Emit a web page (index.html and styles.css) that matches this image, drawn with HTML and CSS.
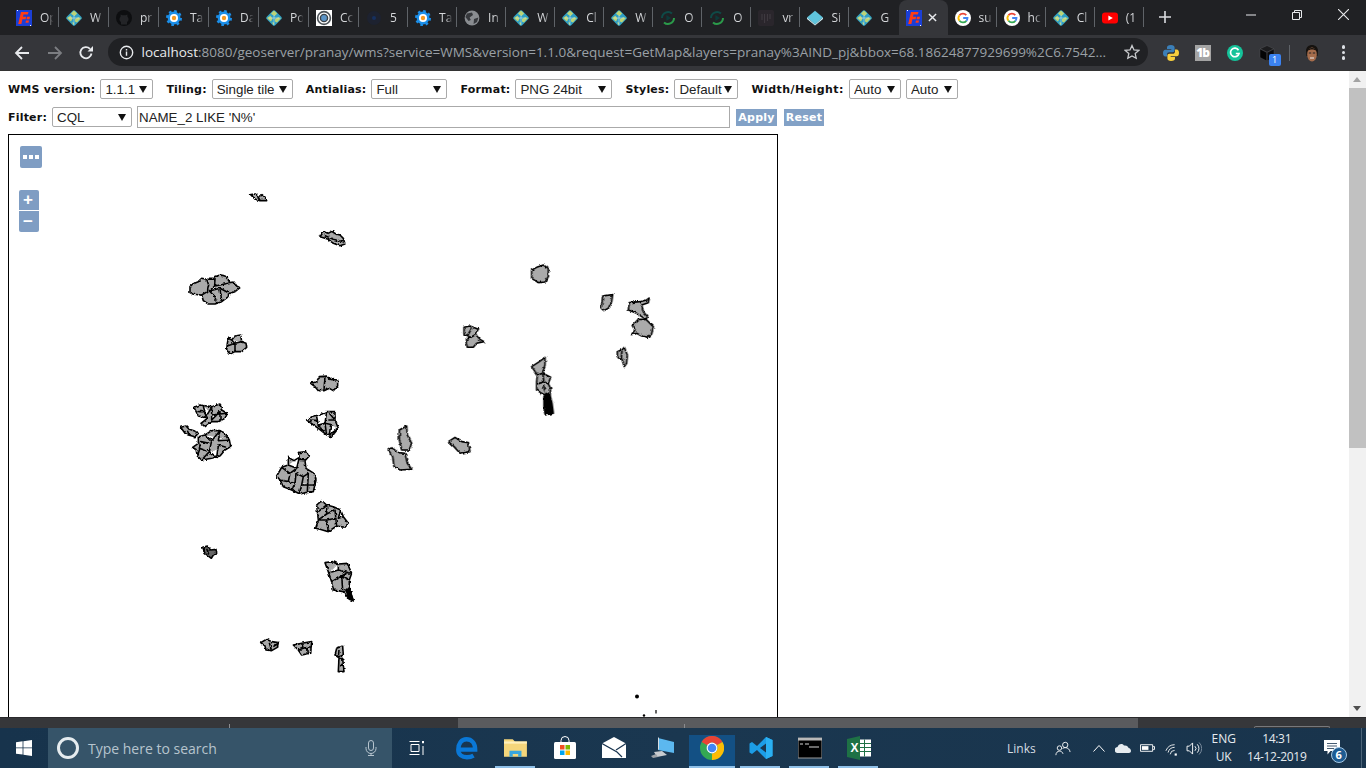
FILE: index.html
```html
<!DOCTYPE html>
<html lang="en">
<head>
  <meta charset="UTF-8">
  <title>GeoServer Layer Preview</title>
  <link rel="stylesheet" href="styles.css">
</head>
<body>
  <!-- shared favicons -->
  <svg class="defs" xmlns="http://www.w3.org/2000/svg">
    <symbol id="i-fw" viewBox="0 0 16 16">
      <rect width="16" height="16" fill="#1b3fd6"/>
      <path d="M1 0h1v1H1zM14 15h1v1h-1z" fill="#fff"/>
      <polygon points="5,2 12.500,2 11.800,4.600 7.500,4.600 7,6.800 10.200,6.800 9.600,9.200 6.400,9.200 5.400,14 2.200,14" fill="#ff3d14"/>
      <path d="M11 6.800h3l-.5 2.400h-3zM10 10.400h3l-.5 2.400h-3z" fill="#ff3d14"/>
    </symbol>
    <symbol id="i-globe" viewBox="0 0 16 16">
      <rect x="2" y="2" width="12" height="12" rx="1.800" transform="rotate(45 8 8)" fill="#2f9fc4"/>
      <path d="M8 .4 11.200 3.600 8.600 6 6 4.600 5 3.400zM1 8l3.400-2.200 2.200 2.600L5 11.400 3.600 10.600zM9 9l3.200-1.800L15 8l-4 4.600L9 11.400zM6 12.400l2 .2L8 15.600z" fill="#bcd476"/>
      <path d="M8 5 8 15M3 8 13 8" stroke="#d9f0f4" stroke-width=".5"/>
    </symbol>
    <symbol id="i-git" viewBox="0 0 16 16">
      <circle cx="8" cy="8" r="8" fill="#0d0e10"/>
      <path d="M5 14.600V12C3 11 3 8 4.600 6.400L4.600 4.400 6.400 5.200H9.600L11.400 4.400V6.400C13 8 13 11 11 12V14.600z" fill="#232427"/>
    </symbol>
    <symbol id="i-gear" viewBox="0 0 16 16">
      <circle cx="8" cy="8" r="6.400" fill="#1b8fe9"/>
      <circle cx="8" cy="8" r="6.800" fill="none" stroke="#1b8fe9" stroke-width="2.400" stroke-dasharray="2.600 2.740"/>
      <circle cx="8" cy="8" r="4" fill="#fff"/>
      <circle cx="8" cy="8" r="2.200" fill="#f59a23"/>
    </symbol>
    <symbol id="i-rings" viewBox="0 0 16 16">
      <rect width="16" height="16" fill="#fff"/>
      <circle cx="8" cy="8" r="6.400" fill="none" stroke="#4b5157" stroke-width="1.600"/>
      <circle cx="8" cy="8" r="3.600" fill="#5a93c6" stroke="#3b4248" stroke-width="1.400"/>
    </symbol>
    <symbol id="i-navy" viewBox="0 0 16 16">
      <circle cx="8" cy="8" r="7" fill="#1d2230"/>
      <circle cx="8" cy="8" r="2" fill="#16305f"/>
    </symbol>
    <symbol id="i-earth" viewBox="0 0 16 16">
      <circle cx="8" cy="8" r="7.400" fill="#8a8d91"/>
      <path d="M3 3.400 8 2.400 9 5 5.600 7.600 6.800 10 4.600 11 1.400 7zM10 9l4.400-1.400L13 12 9.600 14z" fill="#36383c"/>
    </symbol>
    <symbol id="i-sync" viewBox="0 0 16 16">
      <path d="M2 8a6 6 0 0 1 10-4.400" fill="none" stroke="#0e4a47" stroke-width="2"/>
      <path d="M14 8a6 6 0 0 1-10 4.400" fill="none" stroke="#2b9a4a" stroke-width="2"/>
      <polygon points="6.400,5 11,8 6.400,11" fill="#0d3a3a"/>
    </symbol>
    <symbol id="i-bars" viewBox="0 0 16 16">
      <rect width="16" height="16" rx="2" fill="#2a262c"/>
      <path d="M4 4v6M6.600 4v9M9.400 4v7M12 4v5" stroke="#413c43" stroke-width="1"/>
    </symbol>
    <symbol id="i-gem" viewBox="0 0 16 16">
      <polygon points="8,.8 16,7.600 8,14.400 0,7.600" fill="#5fc4dc"/>
      <polygon points="0,7.600 8,14.400 16,7.600 16,9 8,15.400 0,9" fill="#d6f2f8"/>
    </symbol>
    <symbol id="i-google" viewBox="0 0 16 16">
      <circle cx="8" cy="8" r="8" fill="#fff"/>
      <path d="M11.300 5.100A4.500 4.500 0 0 0 4.500 5.200" fill="none" stroke="#ea4335" stroke-width="1.800"/>
      <path d="M4.500 5.200A4.500 4.500 0 0 0 4.500 10.800" fill="none" stroke="#fbbc05" stroke-width="1.800"/>
      <path d="M4.500 10.800A4.500 4.500 0 0 0 11.400 10.900" fill="none" stroke="#34a853" stroke-width="1.800"/>
      <path d="M11.400 10.900A4.500 4.500 0 0 0 12.500 8H8.200" fill="none" stroke="#4285f4" stroke-width="1.800"/>
    </symbol>
    <symbol id="i-yt" viewBox="0 0 16 16">
      <rect y="2.400" width="16" height="11.200" rx="3" fill="#f00"/>
      <polygon points="6.400,5.600 10.800,8 6.400,10.400" fill="#fff"/>
    </symbol>
  </svg>

  <div class="tabstrip">
    <div class="tabs">
      <div class="tab"><svg class="fav"><use href="#i-fw"/></svg><span class="tab-title">Op</span></div>
      <div class="tab"><svg class="fav"><use href="#i-globe"/></svg><span class="tab-title">W</span></div>
      <div class="tab"><svg class="fav"><use href="#i-git"/></svg><span class="tab-title">pr</span></div>
      <div class="tab"><svg class="fav"><use href="#i-gear"/></svg><span class="tab-title">Ta</span></div>
      <div class="tab"><svg class="fav"><use href="#i-gear"/></svg><span class="tab-title">Da</span></div>
      <div class="tab"><svg class="fav"><use href="#i-globe"/></svg><span class="tab-title">Po</span></div>
      <div class="tab"><svg class="fav"><use href="#i-rings"/></svg><span class="tab-title">Cc</span></div>
      <div class="tab"><svg class="fav"><use href="#i-navy"/></svg><span class="tab-title">5</span></div>
      <div class="tab"><svg class="fav"><use href="#i-gear"/></svg><span class="tab-title">Ta</span></div>
      <div class="tab"><svg class="fav"><use href="#i-earth"/></svg><span class="tab-title">In</span></div>
      <div class="tab"><svg class="fav"><use href="#i-globe"/></svg><span class="tab-title">W</span></div>
      <div class="tab"><svg class="fav"><use href="#i-globe"/></svg><span class="tab-title">Cl</span></div>
      <div class="tab"><svg class="fav"><use href="#i-globe"/></svg><span class="tab-title">W</span></div>
      <div class="tab"><svg class="fav"><use href="#i-sync"/></svg><span class="tab-title">O</span></div>
      <div class="tab"><svg class="fav"><use href="#i-sync"/></svg><span class="tab-title">O</span></div>
      <div class="tab"><svg class="fav"><use href="#i-bars"/></svg><span class="tab-title">vr</span></div>
      <div class="tab"><svg class="fav"><use href="#i-gem"/></svg><span class="tab-title">Si</span></div>
      <div class="tab tab-before-active"><svg class="fav"><use href="#i-globe"/></svg><span class="tab-title">G</span></div>
      <div class="tab tab-active"><svg class="fav"><use href="#i-fw"/></svg>
        <svg class="tab-close" viewBox="0 0 10 10"><path d="M1 1l8 8M9 1l-8 8"/></svg></div>
      <div class="tab"><svg class="fav"><use href="#i-google"/></svg><span class="tab-title">su</span></div>
      <div class="tab"><svg class="fav"><use href="#i-google"/></svg><span class="tab-title">hc</span></div>
      <div class="tab"><svg class="fav"><use href="#i-globe"/></svg><span class="tab-title">Cl</span></div>
      <div class="tab"><svg class="fav"><use href="#i-yt"/></svg><span class="tab-title">(1</span></div>
    </div>
    <svg class="new-tab" viewBox="0 0 12 12"><path d="M6 0v12M0 6h12"/></svg>
    <div class="win-controls">
      <div class="win-btn"><svg viewBox="0 0 10 10"><path d="M0 5h10"/></svg></div>
      <div class="win-btn"><svg viewBox="0 0 10 10"><path d="M.5 2.500h7v7h-7zM2.500 2.500v-2h7v7h-2"/></svg></div>
      <div class="win-btn"><svg viewBox="0 0 10 10"><path d="M0 0l10 10M10 0L0 10"/></svg></div>
    </div>
  </div>

  <div class="toolbar">
    <svg class="nav-icon" viewBox="0 0 16 16"><path d="M15 8H2M8 2 2 8l6 6"/></svg>
    <svg class="nav-icon nav-off" viewBox="0 0 16 16"><path d="M1 8h13M8 2l6 6-6 6"/></svg>
    <svg class="nav-icon nav-reload" viewBox="0 0 16 16"><path d="M13.500 8.500A5.600 5.600 0 1 1 12 3.800"/><path class="solid" d="M9.500 6.500H15V1z"/></svg>
    <div class="omnibox">
      <svg class="info-icon" viewBox="0 0 16 16"><circle cx="8" cy="8" r="6.600"/><path d="M8 7v4.500M8 4.200v1.600"/></svg>
      <span class="url"><span class="url-host">localhost</span>:8080/geoserver/pranay/wms?service=WMS&amp;version=1.1.0&amp;request=GetMap&amp;layers=pranay%3AIND_pj&amp;bbox=68.18624877929699%2C6.7542...</span>
      <svg class="star" viewBox="0 0 16 16"><path d="M8 1.500l2 4.400 4.800.5-3.600 3.200 1 4.700L8 11.900l-4.200 2.400 1-4.700L1.200 6.400 6 5.900z"/></svg>
    </div>
    <div class="ext-icons">
      <svg class="ext" viewBox="0 0 16 16">
        <path d="M8 0C5 0 4 1 4 2.500V4h4.300v.7H2.400C.8 4.700 0 6 0 8s.8 3.500 2.300 3.500H4V9.600C4 8 5 7.300 6.300 7.300h3.300c1.200 0 2-.8 2-2V2.500C11.600 1 10.400 0 8 0z" fill="#3b7fb8"/>
        <path d="M8 16c3 0 4-1 4-2.500V12H7.700v-.7h5.900C15.200 11.300 16 10 16 8s-.8-3.500-2.300-3.500H12v1.900C12 8 11 8.700 9.700 8.700H6.400c-1.200 0-2 .8-2 2v2.800C4.400 15 5.600 16 8 16z" fill="#f7cf3d"/>
      </svg>
      <div class="ext-fb">1b</div>
      <svg class="ext" viewBox="0 0 16 16">
        <circle cx="8" cy="8" r="8" fill="#15c39a"/>
        <path d="M11.500 5.200A4.300 4.300 0 1 0 12 8.500H8.800" fill="none" stroke="#fff" stroke-width="1.700"/>
      </svg>
      <div class="ext-cube">
        <svg class="ext" viewBox="0 0 16 16">
          <polygon points="8,.5 15,3.800 8,7.200 1,3.800" fill="#1c1c1e" stroke="#55565a" stroke-width=".5"/>
          <polygon points="1,4 7.800,7.500 7.800,16 1,12.500" fill="#050506" stroke="#55565a" stroke-width=".4"/>
          <polygon points="15,4 8.200,7.500 8.200,16 15,12.500" fill="#0c0c0e" stroke="#55565a" stroke-width=".4"/>
        </svg>
        <span class="ext-badge">1</span>
      </div>
      <span class="toolbar-sep"></span>
      <svg class="avatar" viewBox="0 0 16 20">
        <path d="M2 8C2 0 14 0 14 8L13.500 13 2.500 13z" fill="#15120f"/>
        <ellipse cx="8" cy="11.500" rx="4.800" ry="7" fill="#a66d4c"/>
        <path d="M3 8C4 4 12 4 13 8 10 6 6 6 3 8z" fill="#15120f"/>
        <path d="M4.800 10h2.400M8.800 10h2.400" stroke="#222" stroke-width="1"/>
        <path d="M6 15h4" stroke="#eee" stroke-width="1"/>
      </svg>
      <div class="menu-dots"><i></i><i></i><i></i></div>
    </div>
  </div>

  <div class="viewport">
    <div class="page">
      <div class="form-row form-row-top">
        <label class="field">WMS version:
          <select class="sel sel-version"><option>1.1.1</option></select></label>
        <label class="field">Tiling:
          <select class="sel sel-tiling"><option>Single tile</option></select></label>
        <label class="field">Antialias:
          <select class="sel sel-anti"><option>Full</option></select></label>
        <label class="field">Format:
          <select class="sel sel-format"><option>PNG 24bit</option></select></label>
        <label class="field">Styles:
          <select class="sel sel-styles"><option>Default</option></select></label>
        <label class="field field-size">Width/Height:
          <select class="sel sel-auto"><option>Auto</option></select>
          <select class="sel sel-auto"><option>Auto</option></select></label>
      </div>
      <div class="form-row form-row-filter">
        <label class="field">Filter:
          <select class="sel sel-filter"><option>CQL</option></select></label>
        <input class="filter-input" type="text" value="NAME_2 LIKE 'N%'">
        <button class="map-btn map-btn-apply">Apply</button>
        <button class="map-btn map-btn-reset">Reset</button>
      </div>

      <div class="map">
        <button class="ol-btn ol-more"><i></i><i></i><i></i></button>
        <div class="ol-zoom">
          <button class="ol-btn ol-zoom-btn">+</button>
          <button class="ol-btn ol-zoom-btn">&minus;</button>
        </div>

        <!-- viewBox is in page pixels, each group is in 3x crop pixels -->
        <svg class="districts" viewBox="9 135 768 582" xmlns="http://www.w3.org/2000/svg">
          <defs>
            <filter id="rough" filterUnits="userSpaceOnUse" x="9" y="135" width="768" height="582">
              <feTurbulence type="fractalNoise" baseFrequency=".3" numOctaves="2" seed="7" result="noise"/>
              <feDisplacementMap in="SourceGraphic" in2="noise" scale="3" xChannelSelector="R" yChannelSelector="G"/>
              <feGaussianBlur stdDeviation=".25"/>
            </filter>
          </defs>
          <g filter="url(#rough)">
            <g transform="translate(170 180) scale(.3333)">
              <path d="M242 44 256 42 266 50 276 44 286 52 290 62 270 62 256 58Z M264 50 270 61"/>
              <path d="M450 170 460 156 475 160 485 154 498 162 510 165 520 175 525 192 510 197 490 190 475 178Z M462 166 490 178 522 186"/>
              <path d="M60 320 68 312 85 305 95 295 110 298 130 298 135 290 150 285 165 288 175 300 178 308 192 306 200 318 210 323 195 335 180 340 172 352 155 365 135 372 115 372 100 362 95 345 70 343 60 338Z M110 298 116 315 112 335 95 345 M135 296 134 318 118 333 135 350 140 368 M135 318 175 310 M118 333 150 325 155 362 M150 325 178 340"/>
              <path d="M175 475 185 480 195 468 212 465 215 485 228 490 230 502 215 515 195 515 180 522 170 510 172 490Z M172 498 195 490 195 515 M185 480 195 490 215 485"/>
            </g>
            <g transform="translate(170 370) scale(.3333)">
              <path d="M422 40 440 35 448 20 470 18 480 28 503 30 503 48 490 62 478 55 462 62 445 62 435 50Z M465 20 462 60"/>
              <path d="M410 150 430 138 450 135 470 125 495 125 495 150 505 175 485 200 470 195 445 175Z M440 140 445 165 465 160 470 125 M465 160 470 195 M465 160 490 165 M478 130 495 150 475 150 M440 152 420 150 M445 165 462 185 M482 165 478 195 505 175"/>
              <path d="M72 112 90 105 110 108 125 110 150 102 155 120 172 130 165 145 145 155 125 155 105 170 93 160 112 145 85 138Z M100 108 108 140 125 112 125 150 150 125 150 152 M85 125 108 125 M125 135 170 130"/>
              <path d="M32 172 48 168 58 178 72 182 85 190 75 200 55 195 45 190Z M52 182 58 195"/>
              <path d="M85 200 105 195 125 182 150 182 165 190 178 210 182 230 165 240 150 258 125 265 95 270 82 258 78 238 68 232 85 220Z M105 195 125 212 150 182 145 212 178 210 M125 212 118 245 88 235 92 215 118 220 M118 245 140 262 145 225 168 232 M118 245 95 270 M90 235 82 258"/>
              <path d="M320 318 335 292 355 285 355 262 372 272 388 262 385 248 410 245 418 258 405 272 408 295 432 310 438 330 430 365 405 368 390 372 365 360 340 350 330 330Z M355 285 380 295 388 262 M380 295 360 310 335 292 M360 310 355 335 330 330 M355 335 375 340 378 310 400 320 395 345 438 345 M375 340 365 360 M395 345 388 370 M400 320 415 310 412 365 M385 268 408 270"/>
              <path d="M440 405 455 392 470 405 490 410 512 420 520 440 535 460 525 472 500 468 475 485 450 478 437 475 445 450Z M445 425 470 405 470 432 445 450 470 450 475 485 M470 432 495 420 500 468 M470 450 498 445 M512 420 505 445 520 440"/>
            </g>
            <g transform="translate(380 260) scale(.3333)">
              <path d="M455 30 470 22 490 15 505 25 505 50 495 66 475 68 455 55Z"/>
              <path d="M668 108 698 104 695 125 685 145 672 152 664 145Z"/>
              <path d="M748 128 780 125 800 120 808 114 805 128 785 135 790 155 803 170 798 178 770 160 745 150Z"/>
              <path d="M775 178 798 178 820 200 815 222 805 232 785 228 770 220 754 224 765 210 757 197Z"/>
              <path d="M252 202 270 198 295 208 285 222 300 238 312 245 290 250 280 262 262 262 258 245 268 230 252 222Z M262 228 275 205 M258 240 290 222"/>
              <path d="M712 275 728 268 733 262 742 285 740 310 733 320 726 298 712 290Z M726 272 724 296"/>
              <path d="M455 320 478 305 495 292 495 315 488 340 512 352 505 372 512 385 510 405 500 408 482 398 470 390 470 365 472 345Z M472 345 488 340 492 365 470 372 M492 365 505 372 M490 375 495 395"/>
              <path class="solid" d="M492 410 498 400 510 405 516 430 520 460 495 465 492 440Z"/>
              <path d="M58 510 80 498 82 525 95 550 88 570 65 570 58 540Z"/>
              <path d="M25 570 35 563 55 578 75 580 82 610 95 628 60 630 42 620 38 590Z"/>
              <path d="M205 545 225 532 245 545 265 548 270 575 240 580 222 560Z"/>
            </g>
            <g transform="translate(190 540) scale(.3333)">
              <path class="dark" d="M38 22 52 18 62 30 78 28 80 40 70 45 64 55 45 40Z M50 26 56 42"/>
              <path d="M405 68 430 65 445 72 472 70 485 100 478 120 478 145 490 182 478 178 460 155 430 150 425 125 415 95Z M418 98 445 90 445 72 M445 90 482 100 M425 125 455 108 480 122 M455 108 458 150 M470 100 455 108 M460 155 478 145 M470 150 485 178"/>
              <path class="solid" d="M468 150 478 148 490 182 476 172Z"/>
              <path d="M212 308 230 298 245 305 265 308 262 322 245 332 228 330 225 318Z M238 308 245 332 M250 320 262 312"/>
              <path d="M310 315 335 310 365 305 362 340 335 345 325 330Z M335 310 340 325 325 330 M340 325 362 320 M350 325 352 342"/>
              <path d="M435 345 440 325 458 318 460 345 445 352Z M447 330 445 352"/>
              <path d="M447 355 458 355 462 395 445 395Z M450 374 460 374"/>
            </g>
          </g>
          <circle class="speck" cx="637" cy="696.500" r="2"/>
          <path class="speck-line" d="M656 710v3.500"/>
          <circle class="speck" cx="644" cy="715.500" r="1.200"/>
        </svg>
      </div>
    </div>
    <div class="scrollbar">
      <div class="scroll-arrow scroll-up"></div>
      <div class="scroll-track"><div class="scroll-thumb"></div></div>
      <div class="scroll-arrow scroll-down"></div>
    </div>
  </div>

  <div class="behind-strip">
    <div class="strip-dark strip-left"><span class="strip-tick"></span></div>
    <div class="strip-grey"><span class="strip-tick strip-tick-grey"></span></div>
    <div class="strip-dark strip-right"><span class="strip-pill"></span></div>
  </div>

  <div class="taskbar">
    <div class="start-btn">
      <svg class="win-logo" viewBox="0 0 16 16"><path d="M0 2.200 6.600 1.300V7.500H0zM7.400 1.200 16 0V7.500H7.400zM0 8.300H6.600V14.600L0 13.700zM7.400 8.300H16V16L7.400 14.800z"/></svg>
    </div>
    <div class="search-box">
      <span class="cortana"></span>
      <span class="search-text">Type here to search</span>
      <svg class="mic" viewBox="0 0 12 16"><rect x="3.500" y=".5" width="5" height="10" rx="2.500"/><path d="M1 7v1.500a5 5 0 0 0 10 0V7M6 13.500v2M3 15.500h6"/></svg>
    </div>
    <div class="task-slot task-view">
      <svg class="tray-line" viewBox="0 0 16 16" width="16" height="16"><path d="M.5 1.500h10M.5 14.500h10M2 4.500h8v7H2zM14 1v2.500M14 6v9"/><path d="M13 1h2v2h-2z" class="tray-fill"/></svg>
    </div>
    <div class="task-slot">
      <svg class="app" viewBox="0 0 22 22"><path d="M3 12.500h15.500C18.500 6.500 15 3 10.500 3 6 3 3 7 3 12.500c0 4.500 3.500 7 8 7 2.500 0 4.500-.6 6-1.500" fill="none" stroke="#0a78d7" stroke-width="4"/></svg>
    </div>
    <div class="task-slot task-open">
      <svg class="app" viewBox="0 0 22 22">
        <path d="M0 3h8l2 2h11v14H0z" fill="#f5d67b"/>
        <rect y="5" width="21" height="2" fill="#fff0bb"/>
        <path d="M5 19v-5.500h11V19h-3v-2.500H8V19z" fill="#39a6de"/>
      </svg>
    </div>
    <div class="task-slot">
      <svg class="app" viewBox="0 0 22 24">
        <path d="M7 7V4.500a4 4 0 0 1 8 0V7" fill="none" stroke="#fff" stroke-width="1"/>
        <rect y="6" width="22" height="17" rx="1.500" fill="#fff"/>
        <rect x="6" y="9" width="4.500" height="4.500" fill="#f25022"/>
        <rect x="11.500" y="9" width="4.500" height="4.500" fill="#7fba00"/>
        <rect x="6" y="14.500" width="4.500" height="4.500" fill="#00a4ef"/>
        <rect x="11.500" y="14.500" width="4.500" height="4.500" fill="#ffb900"/>
      </svg>
    </div>
    <div class="task-slot">
      <svg class="app" viewBox="0 0 24 22">
        <path d="M0 6.500 12 0 24 6.500V21H0z" fill="#fff"/>
        <path d="M0 6.500 15 15 20 20" fill="none" stroke="#19344f" stroke-width="1.200"/>
        <path d="M24 6.500 14 13" fill="none" stroke="#19344f" stroke-width="1.200"/>
      </svg>
    </div>
    <div class="task-slot">
      <svg class="app" viewBox="0 0 24 22">
        <polygon points="7,1 23,5 23,16 7,13" fill="#5cb8ef"/>
        <polygon points="8,0 7,1 7,13 8,12" fill="#d8dde2"/>
        <polygon points="3,15 11,14 16,18 6,20" fill="#c8ccd0"/>
        <polygon points="0,19 5,17 7,20 2,21" fill="#9ea3a8"/>
      </svg>
    </div>
    <div class="task-slot task-active task-open">
      <svg class="app" viewBox="0 0 22 22">
        <circle cx="11" cy="11" r="8" fill="none" stroke="#34a853" stroke-width="6"/>
        <path d="M4.100 7A8 8 0 0 1 18 7" fill="none" stroke="#ea4335" stroke-width="6"/>
        <path d="M18 7a8 8 0 0 1-7 12" fill="none" stroke="#fbbc05" stroke-width="6"/>
        <circle cx="11" cy="11" r="5" fill="#fff"/>
        <circle cx="11" cy="11" r="3.900" fill="#4285f4"/>
      </svg>
    </div>
    <div class="task-slot task-open">
      <svg class="app" viewBox="0 0 24 24">
        <path d="M17 1 8 10 3 6 .5 7.500V16.500L3 18 8 14 17 23 23.500 20V4zM17 7.500V16.500L11 12z" fill="#1c9de6"/>
        <path d="M17 1 23.500 4V20L17 23z" fill="#2ab0f2"/>
      </svg>
    </div>
    <div class="task-slot task-open">
      <svg class="app" viewBox="0 0 24 20">
        <rect width="24" height="20" fill="#000" stroke="#9a9a9a"/>
        <rect width="24" height="2.500" fill="#b9b9b9"/>
        <path d="M2 6h3M7 6h4M11 9h10" stroke="#d5d5d5" stroke-width="1.200"/>
      </svg>
    </div>
    <div class="task-slot task-open">
      <svg class="app" viewBox="0 0 24 24">
        <rect x="11" y="3.500" width="13" height="17" fill="#fff"/>
        <path d="M11 7.500h13M11 11.500h13M11 15.500h13M17.500 3.500v17" stroke="#1e7145" stroke-width="1"/>
        <polygon points="0,3 13,0 13,24 0,21" fill="#1e7145"/>
        <text class="excel-x" x="3.500" y="16">X</text>
      </svg>
    </div>

    <div class="tray">
      <span class="tray-text tray-links">Links</span>
      <svg class="tray-icon tray-line tray-people" viewBox="0 0 18 16"><circle cx="11.500" cy="4" r="3"/><circle cx="5" cy="7.500" r="2.500"/><path d="M1 15.500c0-3 2-4.500 4-4.500s3.500 1 4 3M8.500 8c1-.6 2-1 3-1 3 0 5 2 5.500 5"/></svg>
      <svg class="tray-icon tray-line tray-chevron" viewBox="0 0 12 8"><path d="M.5 7.500 6 1.500l5.500 6"/></svg>
      <svg class="tray-icon tray-cloud" viewBox="0 0 16 10"><path d="M3 10a3 3 0 0 1-.5-6C3.500 1 7 0 9 2.500 12 2 13.500 4 13.500 5 15 5 16 6.500 16 8c0 1-1 2-2 2z"/></svg>
      <svg class="tray-icon tray-line tray-battery" viewBox="0 0 16 10"><path d="M.5 1.500h13v7H.5zM14 3.500h1.500v3H14"/><path class="tray-fill" d="M2 3h7v4H2z"/></svg>
      <svg class="tray-icon tray-line tray-wifi" viewBox="0 0 16 14"><path d="M1 8.500A11 11 0 0 1 11 1.500M3.500 10.500A8 8 0 0 1 11 4.500M6 12.500A5 5 0 0 1 11 8"/><path class="tray-fill" d="M11 11.500h2.500v2.500H11z"/></svg>
      <svg class="tray-icon tray-line tray-volume" viewBox="0 0 16 14"><path d="M.5 4.500h2.500L6.500 1v12L3 9.500H.5zM9 4.500a3.500 3.500 0 0 1 0 5M11.500 2.500a6.500 6.500 0 0 1 0 9"/><path class="tray-faint" d="M13.500 .5a9 9 0 0 1 0 13"/></svg>
      <div class="tray-lang"><span>ENG</span><span>UK</span></div>
      <div class="tray-clock"><span>14:31</span><span>14-12-2019</span></div>
      <div class="tray-notify">
        <svg viewBox="0 0 16 15" width="16" height="15"><path d="M0 0h16v11H6.500L3.500 14.500V11H0z" fill="#fff"/><path d="M3 3.500h10M3 6h10M3 8.500h7" stroke="#19344f" stroke-width=".8"/></svg>
        <span class="notify-badge">6</span>
      </div>
      <span class="show-desktop"></span>
    </div>
  </div>
</body>
</html>
```

FILE: styles.css
```css
html, body {
  margin: 0;
  padding: 0;
  height: 100%;
  overflow: hidden;
}

body {
  display: flex;
  flex-direction: column;
  width: 1366px;
  height: 768px;
  background: #fff;
  font-family: 'Open Sans', sans-serif;
}

.defs {
  display: none;
}

/* Tab strip */
.tabstrip {
  display: flex;
  align-items: stretch;
  height: 35px;
  background: #202124;
  flex: none;
}

.tabs {
  display: flex;
  margin-left: 9px;
}

.tab {
  position: relative;
  display: flex;
  align-items: center;
  width: 49.05px;
  padding-left: 7px;
  box-sizing: border-box;
}

.tab:nth-child(-n+7) {
  width: 50px;
}

.tab::after {
  content: '';
  position: absolute;
  right: 0;
  top: 7px;
  height: 20px;
  width: 1px;
  background: #5f6368;
}

.tab-before-active::after,
.tab-active::after {
  display: none;
}

.tab-active {
  background: #35363a;
  border-radius: 8px 8px 0 0;
}

.fav {
  width: 16px;
  height: 16px;
  flex: none;
}

.tab-title {
  width: 17px;
  margin-left: 8px;
  white-space: nowrap;
  font-size: 12px;
  color: #d5d7da;
  -webkit-mask-image: linear-gradient(to right, #000 40%, transparent 80%);
  mask-image: linear-gradient(to right, #000 40%, transparent 80%);
}

.tab-close {
  width: 9px;
  height: 9px;
  margin-left: 6px;
  fill: none;
  stroke: #e8eaed;
  stroke-width: 1.600;
}

.new-tab {
  width: 12px;
  height: 12px;
  margin: 11px 0 0 15px;
  fill: none;
  stroke: #dadce0;
  stroke-width: 1.600;
}

.win-controls {
  display: flex;
  margin-left: auto;
}

.win-btn {
  display: flex;
  align-items: center;
  justify-content: center;
  width: 46px;
  height: 29px;
}

.win-btn svg {
  width: 10px;
  height: 10px;
  fill: none;
  stroke: #e8eaed;
  stroke-width: 1;
}

.win-btn:last-child svg {
  width: 11px;
  height: 11px;
}

/* Toolbar */
.toolbar {
  display: flex;
  align-items: center;
  height: 35px;
  background: #35363a;
  flex: none;
  padding-left: 14px;
  box-sizing: border-box;
}

.nav-icon {
  width: 16px;
  height: 16px;
  margin-right: 16.500px;
  fill: none;
  stroke: #e8eaed;
  stroke-width: 1.800;
}

.nav-off {
  stroke: #7c7e82;
}

.nav-reload {
  margin-left: -1px;
  margin-right: 17.500px;
}

.nav-icon .solid {
  fill: #e8eaed;
  stroke: none;
}

.omnibox {
  display: flex;
  align-items: center;
  width: 1040px;
  height: 28px;
  margin-left: -4px;
  margin-top: -1px;
  padding-left: 11px;
  box-sizing: border-box;
  background: #202124;
  border-radius: 14px;
}

.info-icon {
  width: 15px;
  height: 15px;
  flex: none;
  fill: none;
  stroke: #e8eaed;
  stroke-width: 1.500;
}

.url {
  margin-left: 8px;
  font-size: 13.500px;
  color: #9aa0a6;
  white-space: nowrap;
  overflow: hidden;
  width: 968px;
  flex: none;
}

.url-host {
  color: #e8eaed;
}

.star {
  width: 16px;
  height: 16px;
  margin-left: 14px;
  flex: none;
  fill: none;
  stroke: #c8cacd;
  stroke-width: 1.300;
}

.ext-icons {
  display: flex;
  align-items: center;
  margin-left: 15px;
}

.ext {
  width: 16px;
  height: 16px;
  display: block;
}

.ext-icons > * {
  margin-right: 16px;
  flex: none;
}

.ext-fb {
  width: 16px;
  height: 16px;
  background: #a4a4a4;
  color: #fff;
  font-size: 12px;
  font-weight: 800;
  line-height: 16px;
  text-align: center;
  letter-spacing: -1px;
}

.ext-cube {
  position: relative;
  width: 16px;
  height: 16px;
}

.ext-badge {
  position: absolute;
  left: 10px;
  top: 9px;
  width: 12px;
  height: 12px;
  background: #3b82f0;
  border-radius: 2px;
  color: #fff;
  font-size: 9px;
  line-height: 12px;
  text-align: center;
}

.ext-icons .toolbar-sep {
  width: 1px;
  height: 16px;
  background: #5f6368;
  margin-left: -2px;
  margin-right: 14px;
}

.ext-icons .avatar {
  width: 16px;
  height: 20px;
  margin-right: 22px;
}

.menu-dots {
  display: flex;
  flex-direction: column;
  gap: 2px;
}

.menu-dots i {
  display: block;
  width: 3.500px;
  height: 3.500px;
  border-radius: 50%;
  background: #dee1e6;
}

/* Page area */
.viewport {
  display: flex;
  height: 647px;
  flex: none;
  border-top: 1px solid #333;
  box-sizing: border-box;
  overflow: hidden;
}

.page {
  flex: 1;
  min-width: 0;
  overflow: hidden;
  padding: 8px 0 0 8px;
  box-sizing: border-box;
}

.form-row {
  display: flex;
  align-items: center;
}

.form-row-top {
  height: 20px;
}

.form-row-filter {
  height: 22px;
  margin-top: 7px;
}

.field {
  display: flex;
  align-items: center;
  gap: 5px;
  margin-right: 13px;
  font-family: 'DejaVu Sans', sans-serif;
  font-size: 11px;
  font-weight: bold;
  letter-spacing: .2px;
  color: #111;
  white-space: nowrap;
}

.field-size {
  letter-spacing: .45px;
}

.sel {
  -webkit-appearance: none;
  appearance: none;
  height: 20px;
  padding: 0 0 0 4px;
  border: 1px solid #aaa;
  border-radius: 2px;
  background: #fff url("data:image/svg+xml,%3Csvg xmlns='http://www.w3.org/2000/svg' width='8' height='7'%3E%3Cpath d='M0 0h8L4 7z' fill='%23111'/%3E%3C/svg%3E") no-repeat right 5px center;
  font-family: 'Liberation Sans', sans-serif;
  font-size: 13.333px;
  font-weight: normal;
  letter-spacing: 0;
  color: #222;
}

.sel-version { width: 53px; }
.sel-tiling { width: 81px; }
.sel-anti { width: 76px; }
.sel-format { width: 97px; }
.sel-styles { width: 64px; }
.sel-auto { width: 52px; }
.sel-filter { width: 80px; }

.form-row-filter .field {
  margin-right: 5px;
}

.filter-input {
  width: 593px;
  height: 22px;
  padding: 0 1px;
  box-sizing: border-box;
  border: 1px solid #aaa;
  font-family: 'Liberation Sans', sans-serif;
  font-size: 13.333px;
  color: #222;
}

.map-btn {
  height: 17px;
  width: 40px;
  padding: 0;
  margin-left: 6px;
  border: 0;
  background: #82a1c6;
  color: #fff;
  font-family: 'DejaVu Sans', sans-serif;
  font-size: 11px;
  font-weight: bold;
  letter-spacing: .3px;
  line-height: 17px;
}

.map-btn-apply {
  width: 41px;
}

.map-btn-reset {
  margin-left: 7px;
}

/* Map */
.map {
  position: relative;
  width: 770px;
  height: 600px;
  margin-top: 6px;
  border: 1px solid #000;
  box-sizing: border-box;
}

.districts {
  display: block;
  width: 768px;
  height: 582px;
}

.districts path {
  fill: #aaa;
  stroke: #000;
  stroke-width: 4.800;
  stroke-linejoin: round;
}

.districts path.solid {
  fill: #000;
}

.districts path.dark {
  fill: #666;
}

.districts .speck {
  fill: #000;
}

.districts .speck-line {
  fill: none;
  stroke: #000;
  stroke-width: 1.200;
}

.ol-btn {
  display: flex;
  align-items: center;
  justify-content: center;
  padding: 0;
  border: 0;
  background: #7f9dc3;
  color: #fff;
  font-family: 'Liberation Sans', sans-serif;
  font-weight: bold;
}

.ol-more {
  position: absolute;
  left: 11px;
  top: 11px;
  width: 22px;
  height: 22px;
  gap: 2px;
  border-radius: 2px;
}

.ol-more i {
  width: 4px;
  height: 4px;
  background: #fff;
}

.ol-zoom {
  position: absolute;
  left: 10px;
  top: 55px;
  display: flex;
  flex-direction: column;
  gap: 1px;
}

.ol-zoom-btn {
  width: 20px;
  height: 20px;
  padding-right: 2px;
  font-size: 17px;
  line-height: 20px;
  border-radius: 2px 2px 0 0;
}

.ol-zoom-btn:last-child {
  height: 21px;
  border-radius: 0 0 2px 2px;
}

/* Scrollbar */
.scrollbar {
  display: flex;
  flex-direction: column;
  width: 17px;
  flex: none;
  background: #f1f1f1;
}

.scroll-arrow {
  position: relative;
  height: 17px;
  flex: none;
}

.scroll-arrow::after {
  content: '';
  position: absolute;
  left: 4px;
  border-left: 4.500px solid transparent;
  border-right: 4.500px solid transparent;
}

.scroll-up::after {
  top: 6px;
  border-bottom: 5px solid #a3a3a3;
}

.scroll-down::after {
  top: 6px;
  border-top: 5px solid #505050;
}

.scroll-track {
  flex: 1;
}

.scroll-thumb {
  width: 100%;
  height: 360px;
  background: #c1c1c1;
}

/* Strip of another window, seen above the taskbar */
.behind-strip {
  display: flex;
  height: 11px;
  flex: none;
  border-top: 1px solid #2a2a2c;
  box-sizing: border-box;
}

.strip-dark {
  position: relative;
  background: #36373a;
}

.strip-left {
  width: 458px;
}

.strip-right {
  flex: 1;
}

.strip-grey {
  position: relative;
  width: 680px;
  background: #5a5b5e;
}

.strip-tick {
  position: absolute;
  bottom: 0;
  left: 229px;
  width: 1px;
  height: 4px;
  background: #8b8c8f;
}

.strip-tick-grey {
  left: 226px;
}

.strip-pill {
  position: absolute;
  left: 116px;
  bottom: 0;
  width: 76px;
  height: 2px;
  border: 1px solid #77787b;
  border-bottom: 0;
  border-radius: 4px 4px 0 0;
  box-sizing: border-box;
}

/* Taskbar */
.taskbar {
  display: flex;
  height: 40px;
  flex: none;
  background: linear-gradient(to right, #17334c, #1a3750 50%, #19344c);
  color: #fff;
}

.start-btn {
  display: flex;
  align-items: center;
  justify-content: center;
  width: 48px;
  flex: none;
}

.win-logo {
  width: 16px;
  height: 16px;
  fill: #fff;
}

.search-box {
  display: flex;
  align-items: center;
  width: 344px;
  flex: none;
  background: #365469;
  padding-left: 9px;
  box-sizing: border-box;
}

.cortana {
  width: 16px;
  height: 16px;
  border: 3px solid #e6ecef;
  border-radius: 50%;
  flex: none;
}

.search-text {
  margin-left: 9px;
  font-size: 14px;
  color: #b6c4ce;
}

.mic {
  width: 12px;
  height: 16px;
  margin-left: auto;
  margin-right: 15px;
  fill: none;
  stroke: #b6c4ce;
  stroke-width: 1;
}

.task-slot {
  position: relative;
  display: flex;
  align-items: center;
  justify-content: center;
  width: 49px;
  flex: none;
}

.task-view {
  margin-right: 1px;
}

.task-open::after {
  content: '';
  position: absolute;
  left: 4px;
  right: 5px;
  bottom: 0;
  height: 2px;
  background: #8fc0e8;
}

.task-active {
  background: #135084;
  margin-top: 7px;
  margin-left: 2px;
  margin-right: 1px;
  width: 46px;
}

.task-active::after {
  left: 0;
  right: 0;
}

.task-active .app {
  margin-top: -7px;
}

.app {
  width: 24px;
  height: 24px;
}

.tray-line {
  fill: none;
  stroke: #fff;
  stroke-width: 1;
}

.tray-line .tray-fill {
  fill: #fff;
  stroke: none;
}

.tray-line .tray-faint {
  stroke: #7d8fa0;
}

.excel-x {
  font-family: 'Liberation Sans', sans-serif;
  font-size: 12px;
  font-weight: bold;
  fill: #fff;
}

.tray {
  position: relative;
  display: flex;
  align-items: center;
  margin-left: 23px;
  flex: 1;
  font-size: 12px;
  color: #e6ebef;
}

.tray-links {
  margin-left: 101px;
  color: #d6dde3;
}

.tray-icon {
  flex: none;
}

.tray-people {
  width: 16px;
  height: 15px;
  margin-left: 19px;
}

.tray-chevron {
  width: 12px;
  height: 8px;
  margin-left: 22px;
}

.tray-cloud {
  width: 16px;
  height: 10px;
  margin-left: 10px;
  fill: #e6ebef;
}

.tray-battery {
  width: 15px;
  height: 10px;
  margin-left: 9px;
}

.tray-wifi {
  width: 14px;
  height: 13px;
  margin-left: 10px;
  margin-top: 3px;
}

.tray-volume {
  width: 16px;
  height: 13px;
  margin-left: 7px;
}

.tray-lang {
  display: flex;
  flex-direction: column;
  align-items: center;
  width: 26px;
  margin-left: 9px;
  line-height: 18px;
}

.tray-clock {
  display: flex;
  flex-direction: column;
  align-items: center;
  width: 60px;
  margin-left: 10px;
  line-height: 18px;
  letter-spacing: -.3px;
  white-space: nowrap;
}

.tray-notify {
  position: relative;
  width: 16px;
  height: 15px;
  margin-left: 17px;
  margin-top: -1px;
}

.notify-badge {
  position: absolute;
  left: 7px;
  top: 7px;
  width: 14px;
  height: 14px;
  border: 1px solid #a7c9e4;
  border-radius: 50%;
  background: #1e5c92;
  font-size: 11px;
  font-weight: 700;
  line-height: 14px;
  text-align: center;
  color: #fff;
}

.show-desktop {
  position: absolute;
  right: 4px;
  top: 0;
  bottom: 0;
  width: 1px;
  background: #4c6478;
}
```
